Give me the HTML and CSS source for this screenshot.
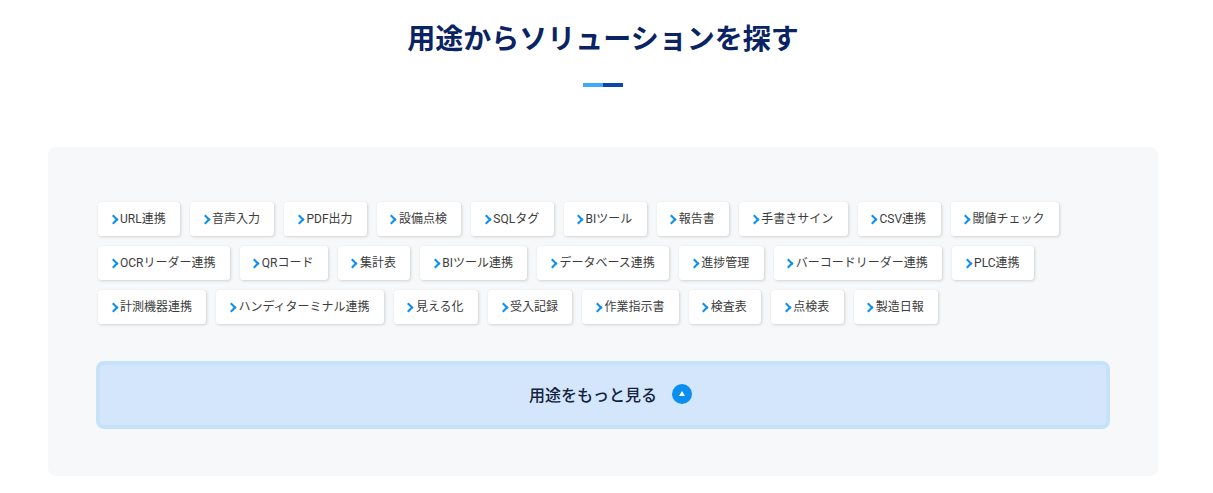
FILE: index.html
```html
<!DOCTYPE html>
<html lang="ja">
<head>
<meta charset="utf-8">
<title>用途からソリューションを探す</title>
<link rel="stylesheet" href="styles.css">
</head>
<body>
<section class="section">
  <h2 class="title">用途からソリューションを探す</h2>
  <div class="rule"><span class="rule-a"></span><span class="rule-b"></span></div>
  <div class="panel">
    <ul class="tags">
      <li class="tag">URL連携</li>
      <li class="tag">音声入力</li>
      <li class="tag">PDF出力</li>
      <li class="tag">設備点検</li>
      <li class="tag">SQLタグ</li>
      <li class="tag">BIツール</li>
      <li class="tag">報告書</li>
      <li class="tag">手書きサイン</li>
      <li class="tag">CSV連携</li>
      <li class="tag">閾値チェック</li>
      <li class="tag">OCRリーダー連携</li>
      <li class="tag">QRコード</li>
      <li class="tag">集計表</li>
      <li class="tag">BIツール連携</li>
      <li class="tag">データベース連携</li>
      <li class="tag">進捗管理</li>
      <li class="tag">バーコードリーダー連携</li>
      <li class="tag">PLC連携</li>
      <li class="tag">計測機器連携</li>
      <li class="tag">ハンディターミナル連携</li>
      <li class="tag">見える化</li>
      <li class="tag">受入記録</li>
      <li class="tag">作業指示書</li>
      <li class="tag">検査表</li>
      <li class="tag">点検表</li>
      <li class="tag">製造日報</li>
    </ul>
    <button class="more" type="button">
      <span>用途をもっと見る</span>
      <span class="more-icon"></span>
    </button>
  </div>
</section>
</body>
</html>
```
FILE: styles.css
```css
* { box-sizing: border-box; }
html, body { margin: 0; padding: 0; background: #fff; }
body { font-family: Roboto, "Noto Sans CJK JP", sans-serif; color: #333; }
.section { padding: 0 55px 0 48px; }
.title {
  margin: 0;
  padding-top: 20px;
  height: 83px;
  text-align: center;
  font-size: 28px;
  line-height: 40px;
  font-weight: 700;
  color: #0a2463;
}
.rule { display: flex; justify-content: center; height: 4px; margin-bottom: 60px; }
.rule-a, .rule-b { width: 20px; height: 4px; }
.rule-a { background: #3fa9f5; }
.rule-b { background: #0a47a9; }
.panel {
  background: #f6f8fa;
  border-radius: 8px;
  height: 329px;
  padding: 55px 48px 0 48px;
}
.tags {
  list-style: none;
  margin: 0 0 0 2px;
  padding: 0;
  display: flex;
  flex-wrap: wrap;
  gap: 10px;
}
.tag {
  position: relative;
  height: 34px;
  padding: 0 14.4px 0 22px;
  background: #fff;
  border-radius: 3px;
  box-shadow: 1px 1px 3px rgba(0,0,0,.15), 0 0 1px rgba(0,0,0,.08);
  font-size: 12px;
  line-height: 34px;
  color: #3c3c3c;
  white-space: nowrap;
}
.tag::before {
  content: "";
  position: absolute;
  left: 11.5px;
  top: 14px;
  width: 5px;
  height: 5px;
  border-top: 2px solid #0a8ff0;
  border-right: 2px solid #0a8ff0;
  transform: rotate(45deg);
}
.more {
  display: flex;
  align-items: center;
  justify-content: center;
  gap: 15px;
  width: 1014px;
  height: 68px;
  margin-top: 37px;
  padding: 0 0 2px 15px;
  background: #d3e6fc;
  border: 4px solid #c5e2f8;
  border-radius: 8px;
  font-family: inherit;
  font-size: 16px;
  font-weight: 500;
  color: #14233c;
}
.more-icon {
  position: relative;
  width: 20px;
  height: 20px;
  border-radius: 50%;
  background: #0a8ff0;
}
.more-icon::after {
  content: "";
  position: absolute;
  left: 7px;
  top: 7px;
  border-left: 3px solid transparent;
  border-right: 3px solid transparent;
  border-bottom: 5px solid #fff;
}
```
